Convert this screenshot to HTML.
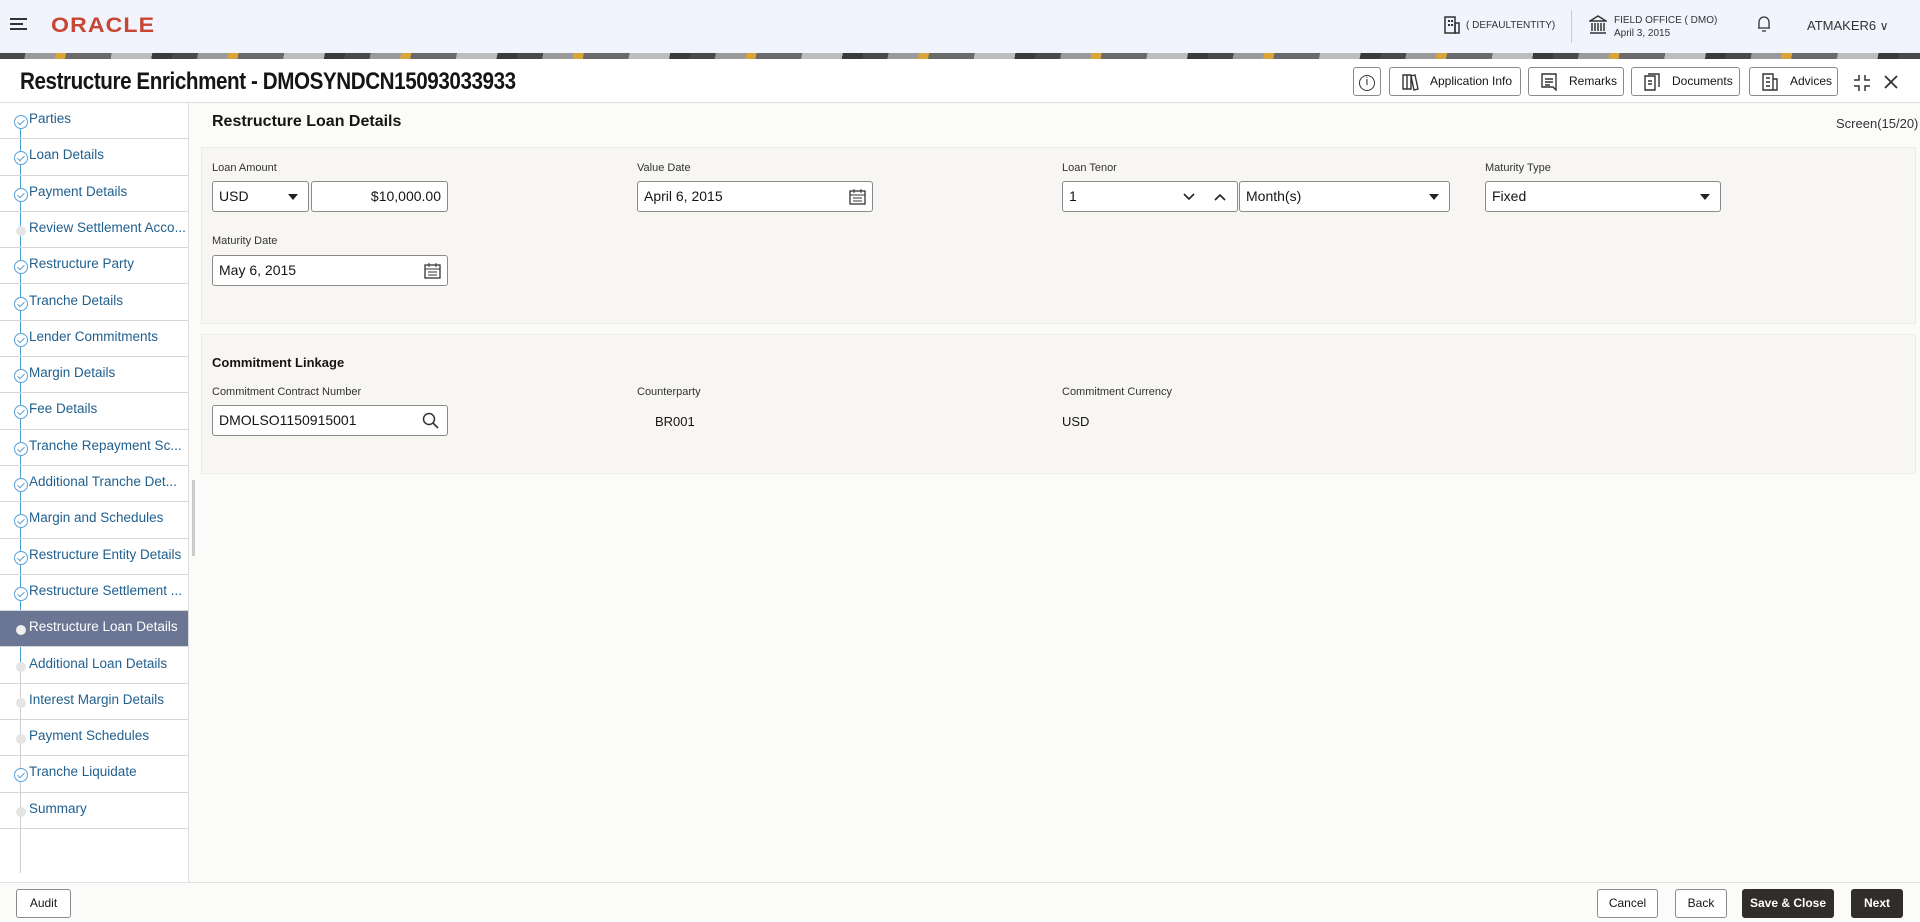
<!DOCTYPE html>
<html><head><meta charset="utf-8"><style>
*{box-sizing:border-box;margin:0;padding:0}
body{width:1920px;height:922px;overflow:hidden;font-family:"Liberation Sans",sans-serif;background:#fbfbfa;position:relative;color:#161513}
.abs{position:absolute}
.hdr{left:0;top:0;width:1920px;height:53px;background:#f1f4fc}
.band{left:0;top:53px;width:1920px;height:6px;background:repeating-linear-gradient(100deg,#4a4a4a 0 25px,#9a9a9a 25px 55px,#d9a53a 55px 65px,#6a6a6a 65px 110px,#bdbdbd 110px 150px,#3a3a3a 150px 170px)}
.title{left:0;top:59px;width:1920px;height:44px;background:#fff;border-bottom:1px solid #ddd}
.side{left:0;top:103px;width:189px;height:779px;background:#fff;border-right:1px solid #ddd}
.item{position:absolute;left:0;width:188px;height:36.3px;border-bottom:1px solid #d6d6d6;font-size:13.5px;color:#1f5f8e;padding:0 0 0 29px;line-height:32px;white-space:nowrap;overflow:hidden}
.item .dot{position:absolute;left:14px;top:12px;width:14px;height:14px;border:1px solid #5aa0d8;border-radius:50%;background:#fff}
.item .dot::after{content:"";position:absolute;left:4px;top:2px;width:3px;height:6px;border-right:1px solid #5aa0d8;border-bottom:1px solid #5aa0d8;transform:rotate(45deg)}
.item .g{position:absolute;left:16px;top:14px;width:10px;height:10px;border-radius:50%;background:#e5e5e5}
.item.act{background:#6b7594;color:#fff}
.item.act .g{background:#eee}
.line{position:absolute;left:20px;width:1px;background:#4aa0d0}
.panel{background:#f7f6f3;border:1px solid #ececec}
.lbl{font-size:11px;color:#333}
.inp{position:absolute;height:31px;border:1px solid #8a8a8a;border-radius:3px;background:#fff;font-size:14px;line-height:29px;padding:0 6px}
.btn{position:absolute;top:67px;height:29px;border:1px solid #8a8a8a;border-radius:3px;background:#fff;font-size:12px;line-height:27px;padding-left:40px}
.fb{position:absolute;top:889px;height:29px;border:1px solid #8a8a8a;border-radius:3px;background:#fff;font-size:12px;line-height:27px;text-align:center}
.dk{background:#312d2a;color:#fff;font-weight:bold;border-color:#312d2a}
.tri{position:absolute;right:10px;top:12px;border-left:5px solid transparent;border-right:5px solid transparent;border-top:6px solid #222}
</style></head><body>
<div class="abs hdr">
 <div class="abs" style="left:10px;top:18px;width:17px;height:2px;background:#333"></div>
 <div class="abs" style="left:10px;top:23px;width:13px;height:2px;background:#333"></div>
 <div class="abs" style="left:10px;top:28px;width:17px;height:2px;background:#333"></div>
 <div class="abs" style="left:51px;top:14px;font-size:21px;color:#c74634;font-weight:bold;letter-spacing:1px;transform:scaleX(1.1);transform-origin:left">ORACLE</div>
 <svg class="abs" style="left:1444px;top:16px" width="16" height="18"><rect x="1" y="1" width="10" height="16" fill="none" stroke="#333" stroke-width="1.5"/><rect x="11" y="7" width="4" height="10" fill="none" stroke="#333" stroke-width="1.5"/><rect x="4" y="4" width="2" height="2" fill="#333"/><rect x="7" y="4" width="2" height="2" fill="#333"/><rect x="4" y="8" width="2" height="2" fill="#333"/><rect x="7" y="8" width="2" height="2" fill="#333"/></svg>
 <div class="abs" style="left:1466px;top:20px;font-size:10px;color:#333">( DEFAULTENTITY)</div>
 <div class="abs" style="left:1571px;top:10px;width:1px;height:33px;background:#ccc"></div>
 <svg class="abs" style="left:1589px;top:15px" width="18" height="20"><path d="M1 6 L9 1 L17 6 Z M3 8v8M6 8v8M9 8v8M12 8v8M15 8v8M1 18h16" fill="none" stroke="#333" stroke-width="1.5"/></svg>
 <div class="abs" style="left:1614px;top:14px;font-size:10px;color:#333;line-height:13px">FIELD OFFICE ( DMO)<br>April 3, 2015</div>
 <svg class="abs" style="left:1757px;top:14px" width="14" height="20"><path d="M2 14 V8 a5 5 0 0 1 10 0 V14 Z M1 14h12 M5 17h4" fill="none" stroke="#333" stroke-width="1.3"/></svg>
 <div class="abs" style="left:1807px;top:18px;font-size:13px;color:#333">ATMAKER6 <span style="font-size:12px">∨</span></div>
</div>
<div class="abs band"></div>
<div class="abs title">
 <div class="abs" style="left:20px;top:9px;font-size:24px;font-weight:bold;letter-spacing:-0.5px;transform:scaleX(0.86);transform-origin:left">Restructure Enrichment - DMOSYNDCN15093033933</div>
 <div class="btn" style="left:1353px;top:8px;width:28px;padding:0;text-align:center"><span style="display:inline-block;width:16px;height:16px;border:1.5px solid #333;border-radius:50%;font-size:11px;line-height:13px;margin-top:5px">i</span></div>
 <div class="btn" style="left:1389px;top:8px;width:132px">Application Info<svg class="abs" style="left:11px;top:5px" width="18" height="18"><path d="M2 2h4v14H2zM6 2h4v14H6zM10 3l4-1 3 14-4 1z" fill="none" stroke="#333" stroke-width="1.4"/></svg></div>
 <div class="btn" style="left:1528px;top:8px;width:96px">Remarks<svg class="abs" style="left:11px;top:5px" width="18" height="18"><path d="M2 1h14v16l-3-3H2zM5 6h8M5 9h8M5 12h5" fill="none" stroke="#333" stroke-width="1.4"/></svg></div>
 <div class="btn" style="left:1631px;top:8px;width:109px">Documents<svg class="abs" style="left:11px;top:5px" width="18" height="18"><path d="M2 3h10v14H2zM5 1h11v13M5 8h4M5 11h4" fill="none" stroke="#333" stroke-width="1.4"/></svg></div>
 <div class="btn" style="left:1749px;top:8px;width:89px">Advices<svg class="abs" style="left:11px;top:5px" width="18" height="18"><path d="M2 1h10v16H2zM12 6h4v11h-4M5 5h4M5 9h4M5 13h4" fill="none" stroke="#333" stroke-width="1.4"/></svg></div>
 <svg class="abs" style="left:1853px;top:15px" width="18" height="18"><path d="M6 1v5H1M12 1v5h5M6 17v-5H1M12 17v-5h5" fill="none" stroke="#333" stroke-width="1.5"/></svg>
 <svg class="abs" style="left:1884px;top:16px" width="14" height="14"><path d="M1 1L13 13M13 1L1 13" stroke="#333" stroke-width="1.8"/></svg>
</div>
<div class="abs side">
 <div class="line" style="top:18px;height:560px"></div>
 <div class="line" style="top:560px;height:210px;background:#ccc"></div>
 <div class="item" style="top:0px"><span class="dot"></span>Parties</div>
 <div class="item" style="top:36.3px"><span class="dot"></span>Loan Details</div>
 <div class="item" style="top:72.6px"><span class="dot"></span>Payment Details</div>
 <div class="item" style="top:108.9px"><span class="g"></span>Review Settlement Acco...</div>
 <div class="item" style="top:145.2px"><span class="dot"></span>Restructure Party</div>
 <div class="item" style="top:181.5px"><span class="dot"></span>Tranche Details</div>
 <div class="item" style="top:217.8px"><span class="dot"></span>Lender Commitments</div>
 <div class="item" style="top:254.1px"><span class="dot"></span>Margin Details</div>
 <div class="item" style="top:290.4px"><span class="dot"></span>Fee Details</div>
 <div class="item" style="top:326.7px"><span class="dot"></span>Tranche Repayment Sc...</div>
 <div class="item" style="top:363px"><span class="dot"></span>Additional Tranche Det...</div>
 <div class="item" style="top:399.3px"><span class="dot"></span>Margin and Schedules</div>
 <div class="item" style="top:435.6px"><span class="dot"></span>Restructure Entity Details</div>
 <div class="item" style="top:471.9px"><span class="dot"></span>Restructure Settlement ...</div>
 <div class="item act" style="top:508.2px"><span class="g"></span>Restructure Loan Details</div>
 <div class="item" style="top:544.5px"><span class="g"></span>Additional Loan Details</div>
 <div class="item" style="top:580.8px"><span class="g"></span>Interest Margin Details</div>
 <div class="item" style="top:617.1px"><span class="g"></span>Payment Schedules</div>
 <div class="item" style="top:653.4px"><span class="dot"></span>Tranche Liquidate</div>
 <div class="item" style="top:689.7px"><span class="g"></span>Summary</div>
</div>
<div class="abs" style="left:192px;top:480px;width:3px;height:76px;background:#ccc"></div>
<div class="abs" style="left:212px;top:113px;font-size:16px;font-weight:bold">Restructure Loan Details</div>
<div class="abs" style="left:1836px;top:116px;font-size:13px;color:#333">Screen(15/20)</div>
<div class="abs panel" style="left:201px;top:147px;width:1715px;height:177px"></div>
<div class="abs panel" style="left:201px;top:334px;width:1715px;height:140px"></div>
<div class="abs lbl" style="left:212px;top:162px">Loan Amount</div>
<div class="abs lbl" style="left:637px;top:162px">Value Date</div>
<div class="abs lbl" style="left:1062px;top:162px">Loan Tenor</div>
<div class="abs lbl" style="left:1485px;top:162px">Maturity Type</div>
<div class="inp" style="left:212px;top:181px;width:97px">USD<span class="tri"></span></div>
<div class="inp" style="left:311px;top:181px;width:137px;text-align:right">$10,000.00</div>
<div class="inp" style="left:637px;top:181px;width:236px">April 6, 2015<svg class="abs" style="right:6px;top:6px" width="17" height="17"><rect x="1" y="3" width="15" height="13" fill="none" stroke="#333" stroke-width="1.3"/><path d="M1 7h15M5 1v4M12 1v4M4 10h9M4 13h9" stroke="#333"/></svg></div>
<div class="inp" style="left:1062px;top:181px;width:176px">1<svg class="abs" style="left:119px;top:10px" width="14" height="10"><path d="M2 2l5 5 5-5" fill="none" stroke="#222" stroke-width="1.6"/></svg><svg class="abs" style="left:150px;top:10px" width="14" height="10"><path d="M2 8l5-5 5 5" fill="none" stroke="#222" stroke-width="1.6"/></svg></div>
<div class="inp" style="left:1239px;top:181px;width:211px">Month(s)<span class="tri"></span></div>
<div class="inp" style="left:1485px;top:181px;width:236px">Fixed<span class="tri"></span></div>
<div class="abs lbl" style="left:212px;top:235px">Maturity Date</div>
<div class="inp" style="left:212px;top:255px;width:236px">May 6, 2015<svg class="abs" style="right:6px;top:6px" width="17" height="17"><rect x="1" y="3" width="15" height="13" fill="none" stroke="#333" stroke-width="1.3"/><path d="M1 7h15M5 1v4M12 1v4M4 10h9M4 13h9" stroke="#333"/></svg></div>
<div class="abs" style="left:212px;top:355px;font-size:13px;font-weight:bold">Commitment Linkage</div>
<div class="abs lbl" style="left:212px;top:386px">Commitment Contract Number</div>
<div class="abs lbl" style="left:637px;top:386px">Counterparty</div>
<div class="abs lbl" style="left:1062px;top:386px">Commitment Currency</div>
<div class="inp" style="left:212px;top:405px;width:236px">DMOLSO1150915001<svg class="abs" style="right:8px;top:6px" width="17" height="17"><circle cx="7" cy="7" r="5.5" fill="none" stroke="#333" stroke-width="1.5"/><path d="M11 11l5 5" stroke="#333" stroke-width="1.6"/></svg></div>
<div class="abs" style="left:655px;top:414px;font-size:13px">BR001</div>
<div class="abs" style="left:1062px;top:414px;font-size:13px">USD</div>
<div class="abs" style="left:0;top:882px;width:1920px;height:40px;background:#fbfbfa;border-top:1px solid #e2e2e2"></div>
<div class="fb" style="left:16px;width:55px">Audit</div>
<div class="fb" style="left:1597px;width:61px">Cancel</div>
<div class="fb" style="left:1675px;width:52px">Back</div>
<div class="fb dk" style="left:1742px;width:92px">Save &amp; Close</div>
<div class="fb dk" style="left:1851px;width:52px">Next</div>
</body></html>
